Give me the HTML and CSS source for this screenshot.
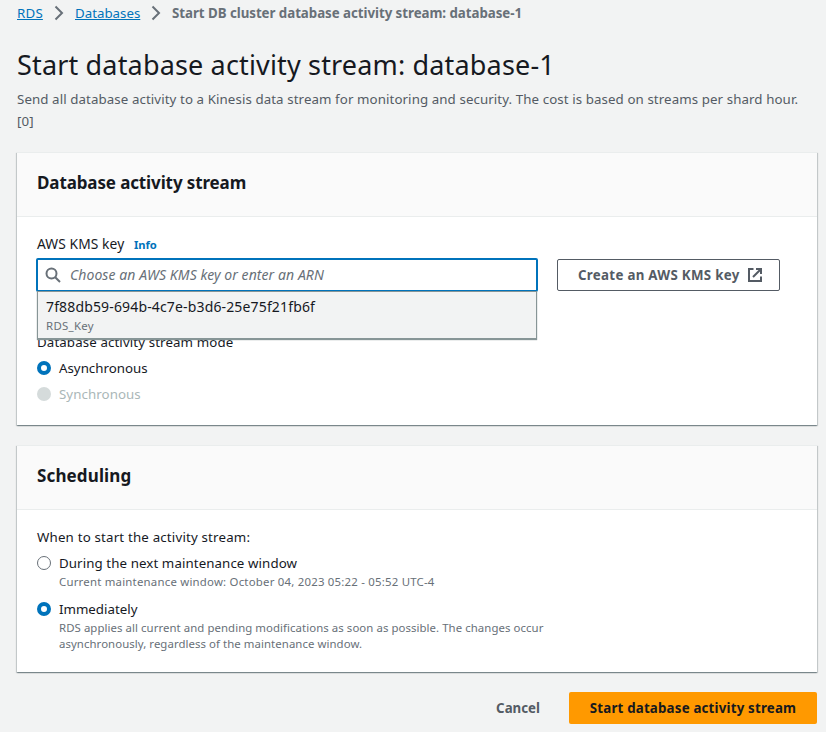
FILE: index.html
```
<!DOCTYPE html>
<html lang="en">
<head>
<meta charset="utf-8">
<title>Start database activity stream</title>
<link rel="stylesheet" href="styles.css">
</head>
<body>
<main class="page">
  <nav class="breadcrumbs">
    <a class="crumb-root" href="#">RDS</a>
    <svg class="chevron" viewBox="0 0 10 16"><path d="M1.500 1.500 8 8 1.500 14.500"/></svg>
    <a class="crumb-parent" href="#">Databases</a>
    <svg class="chevron" viewBox="0 0 10 16"><path d="M1.500 1.500 8 8 1.500 14.500"/></svg>
    <span class="current">Start DB cluster database activity stream: database-1</span>
  </nav>
  <h1>Start database activity stream: database-1</h1>
  <p class="intro">Send all database activity to a Kinesis data stream for monitoring and security. The cost is based on streams per shard hour.<br>[0]</p>

  <section class="card activity">
    <header><h2 class="title-activity">Database activity stream</h2></header>
    <div class="content">
      <div class="label-row"><label class="key-label" for="key">AWS KMS key</label><a class="info" href="#">Info</a></div>
      <div class="key-row">
        <div class="combo">
          <div class="search" id="key">
            <svg class="search-icon" viewBox="0 0 16 16"><circle cx="6.500" cy="6.500" r="5"/><path d="m10.200 10.200 4.800 4.800"/></svg>
            <span class="placeholder">Choose an AWS KMS key or enter an ARN</span>
          </div>
          <div class="dropdown">
            <div class="key-id">7f88db59-694b-4c7e-b3d6-25e75f21fb6f</div>
            <div class="key-alias">RDS_Key</div>
          </div>
        </div>
        <button class="create"><span>Create an AWS KMS key</span><svg class="external" viewBox="0 0 16 16"><path d="M6.500 2H2v12h12V9.500"/><path d="M9 2h5v5M14 2 6 10"/></svg></button>
      </div>
      <div class="mode-label">Database activity stream mode</div>
      <div class="option"><i class="radio checked"></i><span class="async">Asynchronous</span></div>
      <div class="option disabled"><i class="radio off"></i><span class="sync">Synchronous</span></div>
    </div>
  </section>

  <section class="card scheduling">
    <header><h2 class="title-scheduling">Scheduling</h2></header>
    <div class="content">
      <div class="when-label">When to start the activity stream:</div>
      <div class="option"><i class="radio"></i><span class="during">During the next maintenance window</span></div>
      <p class="hint window-hint">Current maintenance window: October 04, 2023 05:22 - 05:52 UTC-4</p>
      <div class="option"><i class="radio checked"></i><span class="immediate">Immediately</span></div>
      <p class="hint apply-hint">RDS applies all current and pending modifications as soon as possible. The changes occur<br>asynchronously, regardless of the maintenance window.</p>
    </div>
  </section>

  <footer class="actions">
    <button class="cancel">Cancel</button>
    <button class="start"><span>Start database activity stream</span></button>
  </footer>
</main>
</body>
</html>
```
FILE: styles.css
```
* { box-sizing: border-box; }
body { margin: 0; background: #f2f3f3; color: #16191f; font: 13.3px/22px "Noto Sans", "Open Sans", sans-serif; white-space: nowrap; }
.page { width: 826px; height: 732px; padding: 2px 9px 0 17px; overflow: hidden; }
h1, h2, p { margin: 0; }
a { color: #0073bb; }
button { font: 700 13.3px/22px "Noto Sans", "Open Sans", sans-serif; color: #545b64; padding: 0; border: 0; background: none; }
.breadcrumbs { display: flex; height: 22px; align-items: center; }
.crumb-root { width: 26px; letter-spacing: .2px; }
.crumb-parent { width: 65px; }
.chevron { width: 10px; height: 16px; margin: 0 11px; fill: none; stroke: #687078; stroke-width: 2; }
.current { color: #687078; font-weight: 700; letter-spacing: -.04px; }
h1 { font-size: 27px; line-height: 36px; font-weight: 400; margin-top: 23px; letter-spacing: .16px; }
.intro { color: #545b64; margin-top: 5px; letter-spacing: .09px; }
.card { width: 800px; background: #fff; border-top: 1px solid #eaeded; box-shadow: 0 1px 1px rgba(0, 28, 36, .3), 1px 1px 1px rgba(0, 28, 36, .15), -1px 1px 1px rgba(0, 28, 36, .15); }
.card header { height: 64px; padding: 19px 20px; background: #fafafa; border-bottom: 1px solid #eaeded; }
h2 { font-size: 17px; line-height: 22px; font-weight: 700; }
.title-activity { letter-spacing: -.12px; }
.title-scheduling { letter-spacing: .13px; }
.content { padding: 16px 20px 0; }
.activity { height: 273px; margin-top: 20px; }
.scheduling { height: 227px; margin-top: 20px; }
.label-row { display: flex; gap: 10px; height: 25px; }
.key-label { width: 87px; font-size: 13.8px; letter-spacing: .08px; }
.info { padding-top: 1px; font-size: 11.2px; font-weight: 700; text-decoration: none; letter-spacing: -.1px; }
.key-row { display: flex; gap: 19px; height: 34px; align-items: center; }
.combo { position: relative; width: 502px; margin-left: -1px; height: 34px; }
.search { display: flex; align-items: center; height: 34px; padding-left: 7px; gap: 9px; border: 2px solid #0073bb; border-radius: 2px; background: #fff; }
.search-icon { width: 16px; height: 16px; fill: none; stroke: #687078; stroke-width: 2; }
.placeholder { color: #687078; font-style: italic; font-size: 14px; letter-spacing: .07px; }
.dropdown { position: absolute; z-index: 1; left: 1px; top: 33px; width: 500px; height: 48px; padding: 5px 8px 0; background: #f2f3f3; border: 1px solid #879596; box-shadow: 0 1px 1px #879596; }
.key-id { font-size: 14px; line-height: 20px; letter-spacing: .15px; }
.key-alias { padding-top: 1px; font-size: 11.4px; line-height: 16px; color: #687078; letter-spacing: .3px; }
.create { display: flex; align-items: center; gap: 7px; width: 223px; height: 32px; padding: 0 16px 0 20px; border: 1px solid #545b64; border-radius: 2px; background: #fff; letter-spacing: .3px; }
.external { width: 16px; height: 16px; fill: none; stroke: #545b64; stroke-width: 2; }
.mode-label { margin-top: 39px; letter-spacing: .11px; }
.option { display: flex; align-items: center; height: 22px; margin-top: 4px; gap: 8px; }
.radio { width: 14px; height: 14px; border: 1px solid #687078; border-radius: 50%; background: #fff; }
.radio.checked { border: 4px solid #0073bb; }
.radio.off { border: 0; background: #d5dbdb; }
.disabled { color: #aab7b8; }
.sync { letter-spacing: .07px; }
.when-label { letter-spacing: .18px; }
.during { letter-spacing: .09px; }
.hint { margin-left: 22px; font-size: 11.4px; line-height: 16px; color: #687078; }
.window-hint { margin-bottom: 8px; letter-spacing: .22px; }
.apply-hint { letter-spacing: .065px; }
.actions { display: flex; justify-content: flex-end; align-items: center; gap: 29px; width: 800px; height: 32px; margin-top: 20px; }
.start { width: 248px; height: 32px; background: #ff9900; border-radius: 2px; color: #16191f; letter-spacing: .19px; }
```
